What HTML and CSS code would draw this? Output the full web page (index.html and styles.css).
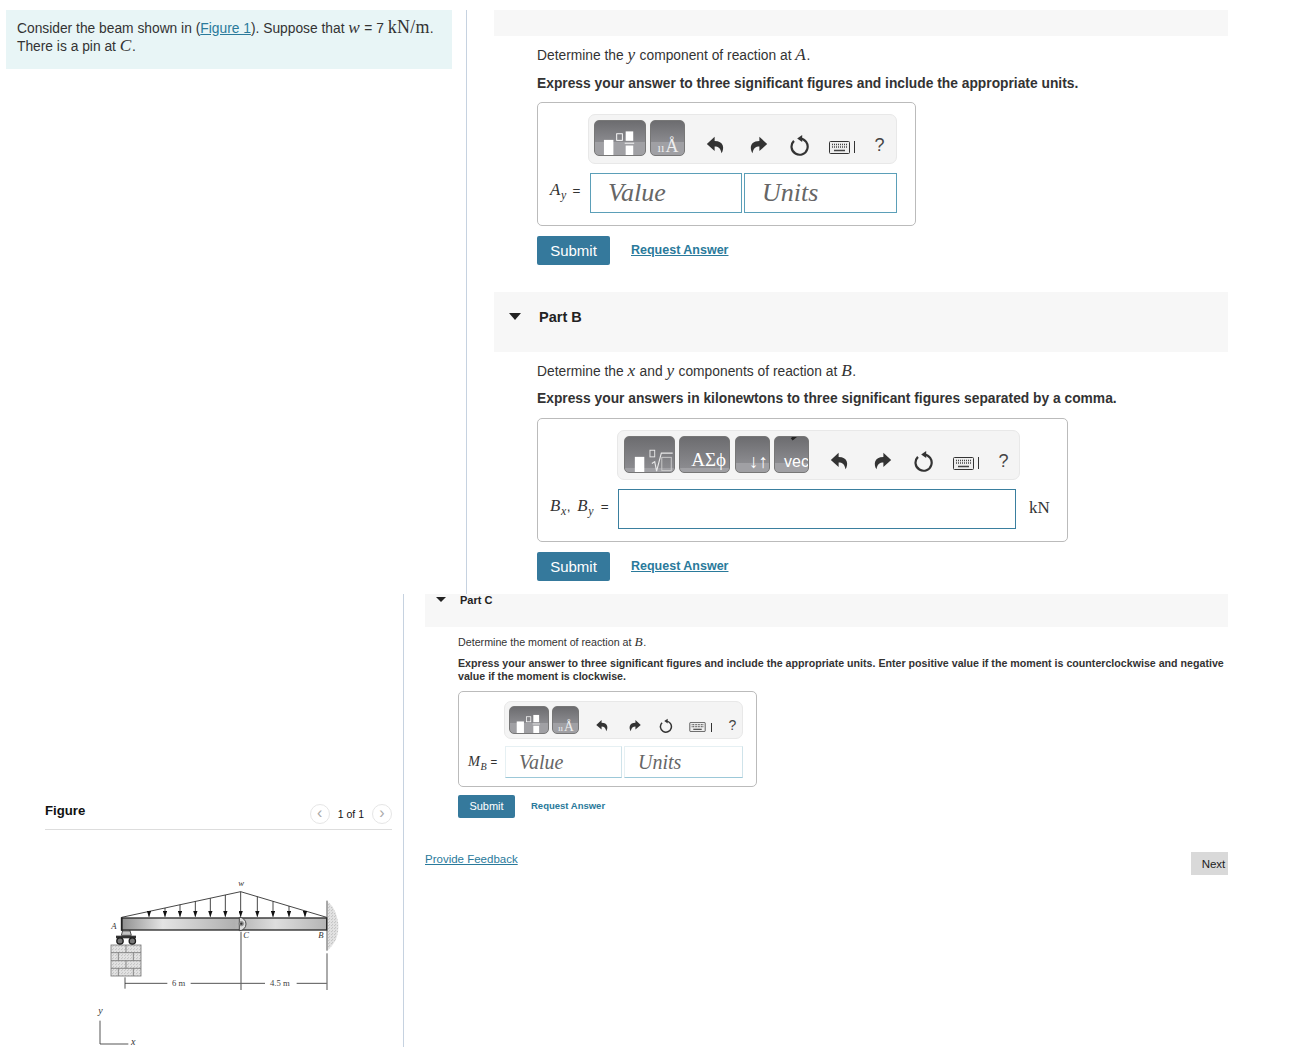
FILE: index.html
```html
<!DOCTYPE html>
<html>

	<head lang="en">
		<meta charset="UTF-8">
		<title>Beam reactions</title>
		<link rel="stylesheet" href="styles.css">
	</head>

	<body>
		<svg class="defs" width="0" height="0">
			<symbol id="undo" viewBox="0 0 24 24"><path d="M10.500 7.500V3L2 11l8.500 7.500v-4.800c4 0 6.500 1.800 7.500 7.300 3.500-5.500 2.500-13.500-7.500-13.500z"/></symbol>
			<symbol id="redo" viewBox="0 0 24 24"><path d="M13.500 7.500V3L22 11l-8.500 7.500v-4.800c-4 0-6.500 1.800-7.500 7.300-3.500-5.500-2.500-13.500 7.500-13.500z"/></symbol>
			<symbol id="reset" viewBox="0 0 24 24"><path d="M6.500 7.500A8.800 8.800 0 1 0 13 5" fill="none" stroke="currentColor" stroke-width="2.400"/><path d="M10 4.800 15.500 1V8.800z"/></symbol>
			<symbol id="keys" viewBox="0 0 21 13"><rect x="0.500" y="0.500" width="20" height="12" rx="1" fill="#eee" stroke="#333"/><path d="M3 3.500h15M3 6h15" stroke="#444" stroke-width="1.500" stroke-dasharray="1 1"/><path d="M5 9.500h11" stroke="#444" stroke-width="1.500"/></symbol>
		</svg>

		<!-- top half -->
		<div class="top">
			<div class="note">
				Consider the beam shown in (<a href="#">Figure 1</a>). Suppose that <i class="m">w</i> = 7 <span class="m-up">kN/m</span>.<br>
				There is a pin at <i class="m">C</i>.
			</div>
			<div class="main">
				<div class="bar bar-a"></div>
				<div class="body">
					<p class="ask">Determine the <i class="m">y</i> component of reaction at <i class="m">A</i>.</p>
					<p class="hint">Express your answer to three significant figures and include the appropriate units.</p>
					<div class="box box-a">
						<div class="toolbar tb-a">
							<div class="btn b-tmpl">
								<svg viewBox="0 0 52 36"><rect x="9" y="20" width="10" height="16" fill="#fff"/><rect x="22.500" y="13.500" width="6" height="7" fill="none" stroke="#fff"/><rect x="32" y="11" width="8" height="10" fill="#fff"/><path d="M31 23.500h10" stroke="#fff"/><rect x="32" y="26" width="8" height="10" fill="#fff"/></svg>
							</div>
							<div class="btn b-unit">
								<svg viewBox="0 0 35 36"><text x="7" y="33" class="ic-s">ıı</text><text x="15.500" y="33" class="ic-l">Å</text></svg>
							</div>
							<div class="tools">
								<svg class="ic"><use href="#undo"/></svg>
								<svg class="ic"><use href="#redo"/></svg>
								<svg class="ic"><use href="#reset"/></svg>
								<svg class="kb"><use href="#keys"/></svg>
								<span class="pipe"></span>
								<span class="qm">?</span>
							</div>
						</div>
						<div class="row">
							<span class="lbl lbl-a"><i class="m">A<sub>y</sub></i> =</span>
							<div class="inp w-val">Value</div>
							<div class="inp w-unit">Units</div>
						</div>
					</div>
					<div class="actions">
						<button class="submit">Submit</button>
						<a href="#" class="req">Request Answer</a>
					</div>
				</div>

				<div class="bar bar-b">
					<span class="tri"></span>
					<b>Part B</b>
				</div>
				<div class="body">
					<p class="ask ask-b">Determine the <i class="m">x</i> and <i class="m">y</i> components of reaction at <i class="m">B</i>.</p>
					<p class="hint hint-b">Express your answers in kilonewtons to three significant figures separated by a comma.</p>
					<div class="box box-b">
						<div class="toolbar tb-b">
							<div class="btn b-root">
								<svg viewBox="0 0 51 37"><rect x="10" y="21" width="10" height="16" fill="#fff"/><rect x="26" y="14" width="5" height="7" fill="none" stroke="#e8e8e8"/><path d="M28 28l3-2 2 10 5-19h12" fill="none" stroke="#e8e8e8" stroke-width="1.200"/><rect x="38.500" y="21.500" width="10" height="14" fill="none" stroke="#ccc"/></svg>
							</div>
							<div class="btn b-greek"><span>ΑΣϕ</span></div>
							<div class="btn b-arrows"><span>↓↑</span></div>
							<div class="btn b-vec"><span>vec</span></div>
							<div class="tools">
								<svg class="ic"><use href="#undo"/></svg>
								<svg class="ic"><use href="#redo"/></svg>
								<svg class="ic"><use href="#reset"/></svg>
								<svg class="kb"><use href="#keys"/></svg>
								<span class="pipe"></span>
								<span class="qm">?</span>
							</div>
						</div>
						<div class="row">
							<span class="lbl lbl-b"><i class="m">B<sub>x</sub></i>, <i class="m">B<sub>y</sub></i> =</span>
							<div class="inp w-wide"></div>
							<span class="unit">kN</span>
						</div>
					</div>
					<div class="actions">
						<button class="submit">Submit</button>
						<a href="#" class="req">Request Answer</a>
					</div>
				</div>
			</div>
		</div>

		<!-- bottom half, smaller zoom -->
		<div class="bottom">
			<div class="fig">
				<div class="fig-head">
					<b>Figure</b>
					<div class="pager">
						<span class="round">‹</span>
						<span>1 of 1</span>
						<span class="round">›</span>
					</div>
				</div>
				<svg class="beam" viewBox="0 0 840 555">
					<defs>
						<linearGradient id="steel" x1="0" x2="1" y1="0" y2="0">
							<stop offset="0" stop-color="#8f8f8f"/>
							<stop offset="0.2" stop-color="#e4e4e4"/>
							<stop offset="0.55" stop-color="#b0b0b0"/>
							<stop offset="0.75" stop-color="#dedede"/>
							<stop offset="1" stop-color="#b4b4b4"/>
						</linearGradient>
						<pattern id="speck" width="9" height="9" patternUnits="userSpaceOnUse">
							<rect width="9" height="9" fill="#e6e6e6"/>
							<circle cx="2" cy="2" r="1.600" fill="#aaa"/>
							<circle cx="7" cy="5" r="1.400" fill="#999"/>
							<circle cx="3" cy="7.500" r="1" fill="#bbb"/>
						</pattern>
						<marker id="head" markerWidth="18" markerHeight="13" refX="13" refY="5" orient="auto" markerUnits="userSpaceOnUse" viewBox="0 0 14 10"><path d="M0 0L14 5L0 10z" fill="#111"/></marker>
					</defs>
					<!-- bricks -->
					<g stroke="#777" stroke-width="2.500">
						<rect x="93" y="225" width="90" height="93" fill="url(#speck)"/>
						<path d="M93 248h90M93 272h90M93 295h90M138 225v23M115 248v24M160 248v24M138 272v23M115 295v23M160 295v23" fill="none"/>
					</g>
					<!-- roller support -->
					<path d="M124 196L132 168H146L154 196z" fill="#c4c4c4" stroke="#333" stroke-width="2.500"/>
					<circle cx="139" cy="166" r="7" fill="#ddd" stroke="#333" stroke-width="2.500"/>
					<path d="M128 183H150" stroke="#444" stroke-width="2"/>
					<rect x="108" y="197" width="60" height="8" fill="#333"/>
					<circle cx="120" cy="213" r="9.500" fill="#777" stroke="#1a1a1a" stroke-width="4"/>
					<circle cx="157" cy="213" r="9.500" fill="#777" stroke="#1a1a1a" stroke-width="4"/>
					<!-- wall -->
					<path d="M743 96C760 105 775 140 775 170C775 205 760 225 743 240z" fill="url(#speck)"/>
					<path d="M741 92V242" stroke="#555" stroke-width="3"/>
					<!-- beam -->
					<rect x="125" y="144" width="615" height="36" fill="url(#steel)" stroke="#2a2a2a" stroke-width="4"/>
					<path d="M125 142V182" stroke="#222" stroke-width="5"/>
					<path d="M478 142a20 20 0 0 1 0 40z" fill="#ddd" stroke="#333" stroke-width="2.500"/>
					<circle cx="484" cy="161" r="7" fill="#999" stroke="#555"/>
					<circle cx="484" cy="161" r="3.500" fill="#333"/>
					<!-- load -->
					<path d="M125 142L482 65L740 142" fill="none" stroke="#222" stroke-width="2.500"/>
					<g stroke="#222" stroke-width="2.500">
						<line x1="207" y1="124" x2="207" y2="140" marker-end="url(#head)"/>
						<line x1="255" y1="114" x2="255" y2="140" marker-end="url(#head)"/>
						<line x1="300" y1="104" x2="300" y2="140" marker-end="url(#head)"/>
						<line x1="346" y1="94" x2="346" y2="140" marker-end="url(#head)"/>
						<line x1="391" y1="85" x2="391" y2="140" marker-end="url(#head)"/>
						<line x1="436" y1="75" x2="436" y2="140" marker-end="url(#head)"/>
						<line x1="482" y1="65" x2="482" y2="140" marker-end="url(#head)"/>
						<line x1="532" y1="80" x2="532" y2="140" marker-end="url(#head)"/>
						<line x1="579" y1="94" x2="579" y2="140" marker-end="url(#head)"/>
						<line x1="627" y1="108" x2="627" y2="140" marker-end="url(#head)"/>
						<line x1="675" y1="123" x2="675" y2="140" marker-end="url(#head)"/>
					</g>
					<!-- dimensions -->
					<g stroke="#333" stroke-width="2.500" fill="none">
						<path d="M135 322V356M135 340H262M332 340H555M650 340H740"/>
						<path d="M483 185V360" stroke-width="3.500" stroke="#666"/>
						<path d="M741 250V360"/>
						<path d="M60 452V522H145"/>
					</g>
					<g class="fig-txt">
						<text x="94" y="178">A</text>
						<text x="490" y="203">C</text>
						<text x="715" y="204">B</text>
						<text x="475" y="48">w</text>
						<text x="55" y="432" class="fig-ax">y</text>
						<text x="153" y="526" class="fig-ax">x</text>
					</g>
					<g class="fig-dim">
						<text x="276" y="347">6 m</text>
						<text x="570" y="347">4.5 m</text>
					</g>
				</svg>
			</div>
			<div class="main-c">
				<div class="bar bar-c">
					<span class="tri tri-c"></span>
					<b>Part C</b>
				</div>
				<div class="body-c">
					<p class="ask-c">Determine the moment of reaction at <i class="m">B</i>.</p>
					<p class="hint-c">Express your answer to three significant figures and include the appropriate units. Enter positive value if the moment is counterclockwise and negative value if the moment is clockwise.</p>
					<div class="box box-c">
						<div class="toolbar tb-c">
							<div class="btn b-tmpl-c">
								<svg viewBox="0 0 52 36"><rect x="9" y="20" width="10" height="16" fill="#fff"/><rect x="22.500" y="13.500" width="6" height="7" fill="none" stroke="#fff"/><rect x="32" y="11" width="8" height="10" fill="#fff"/><path d="M31 23.500h10" stroke="#fff"/><rect x="32" y="26" width="8" height="10" fill="#fff"/></svg>
							</div>
							<div class="btn b-unit-c">
								<svg viewBox="0 0 35 36"><text x="7" y="33" class="ic-s">ıı</text><text x="15.500" y="33" class="ic-l">Å</text></svg>
							</div>
							<div class="tools">
								<svg class="ic"><use href="#undo"/></svg>
								<svg class="ic"><use href="#redo"/></svg>
								<svg class="ic"><use href="#reset"/></svg>
								<svg class="kb"><use href="#keys"/></svg>
								<span class="pipe"></span>
								<span class="qm">?</span>
							</div>
						</div>
						<div class="row">
							<span class="lbl lbl-c"><i class="m">M<sub>B</sub></i> =</span>
							<div class="inp inp-c w-val-c">Value</div>
							<div class="inp inp-c w-unit-c">Units</div>
						</div>
					</div>
					<div class="actions actions-c">
						<button class="submit submit-c">Submit</button>
						<a href="#" class="req req-c">Request Answer</a>
					</div>
				</div>
				<div class="foot">
					<a href="#" class="feedback">Provide Feedback</a>
					<button class="next">Next</button>
				</div>
			</div>
		</div>
	</body>

</html>
```

FILE: styles.css
```css
* {
	margin: 0;
	padding: 0;
	box-sizing: border-box;
}

body {
	font-family: "Liberation Sans", Arial, sans-serif;
	font-size: 13.800px;
	line-height: 20px;
	color: #333;
	background: #fff;
}

a {
	color: #2a7a9b;
}

.defs {
	display: block;
	height: 0;
}

.m {
	font-family: "Liberation Serif", serif;
	font-size: 1.250em;
	line-height: 0;
	letter-spacing: 0.600px;
}

.m sub {
	font-size: 0.700em;
	line-height: 0;
}

.m-up {
	font-family: "Liberation Serif", serif;
	font-size: 1.300em;
	line-height: 0;
	letter-spacing: 0.300px;
}

/* top half */
.top {
	display: flex;
	height: 594px;
	padding-top: 10px;
}

.note {
	width: 446px;
	height: 59px;
	margin-left: 6px;
	padding: 10px 11px;
	background-color: #e8f5f6;
	line-height: 18px;
}

.main {
	width: 762px;
	margin-left: 14px;
	padding-left: 27px;
	border-left: 1px solid #c6d2e0;
}

.bar {
	background-color: #f7f7f7;
}

.bar-a {
	height: 26px;
}

.bar-b {
	display: flex;
	align-items: center;
	height: 60px;
	margin-top: 27px;
	padding: 0 0 11px 15px;
	font-size: 14.500px;
	color: #222;
}

.tri {
	width: 0;
	height: 0;
	margin-right: 18px;
	border-left: 6px solid transparent;
	border-right: 6px solid transparent;
	border-top: 7px solid #222;
}

.body {
	padding-left: 43px;
}

.ask {
	margin-top: 10px;
}

.hint {
	margin-top: 8px;
	font-weight: bold;
}

.hint-b {
	margin-top: 7px;
}

/* answer box */
.box {
	margin-top: 8px;
	border: 1px solid #bbb;
	border-radius: 5px;
}

.box-a {
	width: 379px;
	height: 124px;
	padding-top: 11px;
}

.box-b {
	width: 531px;
	height: 124px;
	margin-top: 9px;
	padding-top: 11px;
}

.toolbar {
	display: flex;
	align-items: flex-start;
	height: 50px;
	padding: 5px 0 0 5px;
	background-color: #f4f4f4;
	border: 1px solid #e8e8e8;
	border-radius: 7px;
}

.tb-a {
	width: 309px;
	margin-left: 50px;
	gap: 4px;
}

.tb-b {
	width: 403px;
	margin-left: 79px;
	padding-left: 6px;
	gap: 4px;
}

.btn {
	overflow: hidden;
	height: 36px;
	border-radius: 5px;
	border: 1px solid #777;
	background: linear-gradient(#6c6c6f, #8b8b8f 62%, #a0a0a4 62%);
	color: #fff;
	text-align: right;
	white-space: nowrap;
}

.btn svg {
	display: block;
	width: 100%;
	height: 100%;
}

.ic-s {
	font-family: "Liberation Serif", serif;
	font-size: 13px;
	fill: #eee;
}

.ic-l {
	font-family: "Liberation Serif", serif;
	font-size: 19px;
	fill: #eee;
}

.b-tmpl {
	width: 52px;
}

.b-unit {
	width: 35px;
}

.b-root,
.b-greek,
.b-arrows,
.b-vec {
	height: 37px;
	background: linear-gradient(#6c6c6f, #8b8b8f 88%, #a0a0a4 88%);
}

.b-root,
.b-greek {
	width: 51px;
}

.b-arrows {
	width: 35px;
	margin-left: 1px;
	background: linear-gradient(#6c6c6f, #8b8b8f 74%, #a0a0a4 74%);
}

.b-vec {
	position: relative;
	width: 35px;
	background: linear-gradient(#6c6c6f, #8b8b8f 74%, #a0a0a4 74%);
}

/* the little vector mark clipped at the top of the button */
.b-vec::before {
	content: "";
	position: absolute;
	top: -1px;
	left: 16px;
	width: 6px;
	height: 3px;
	background-color: #222;
	transform: rotate(-40deg);
}

.b-greek span {
	display: block;
	padding-right: 3px;
	font-family: "Liberation Serif", serif;
	font-size: 19px;
	line-height: 46px;
}

.b-arrows span {
	display: block;
	padding-right: 1px;
	font-size: 19px;
	line-height: 50px;
}

.b-vec span {
	display: block;
	margin-left: 9px;
	text-align: left;
	font-size: 16px;
	line-height: 50px;
}

.tools {
	display: flex;
	align-items: center;
	height: 40px;
	margin-top: 5px;
	color: #333;
}

.tb-a .tools {
	margin-left: 16px;
	gap: 19.500px;
}

.tb-b .tools {
	margin-left: 16px;
	gap: 19.500px;
}

.ic {
	width: 22px;
	height: 22px;
	fill: #333;
	flex: none;
}

.kb {
	width: 21px;
	height: 13px;
	margin-top: 4px;
	margin-left: -1px;
	flex: none;
}

.pipe {
	width: 1px;
	height: 12px;
	margin: 4px 0 0 -15px;
	background-color: #333;
}

.qm {
	font-size: 18px;
	color: #444;
}

.row {
	display: flex;
	align-items: center;
	margin-top: 9px;
	padding-left: 12px;
}

.lbl {
	flex: none;
	padding-bottom: 4px;
	font-size: 13.500px;
}

.lbl-a {
	width: 40px;
	word-spacing: 2px;
}

.lbl-b {
	width: 68px;
	word-spacing: 3px;
}

.inp {
	height: 40px;
	padding-left: 17px;
	border: 1px solid #5b9fb8;
	font-family: "Liberation Serif", serif;
	font-style: italic;
	font-size: 26px;
	line-height: 38px;
	color: #666;
}

.w-val {
	width: 152px;
	margin-right: 2px;
}

.w-unit {
	width: 153px;
}

.w-wide {
	width: 398px;
	border-color: #3a7f9f;
}

.unit {
	margin-left: 13px;
	padding-bottom: 2px;
	font-family: "Liberation Serif", serif;
	font-size: 17px;
}

.actions {
	display: flex;
	align-items: center;
	margin-top: 10px;
}

.submit {
	width: 73px;
	height: 29px;
	padding-bottom: 1px;
	border: none;
	border-radius: 2px;
	background-color: #35799c;
	color: #fff;
	font-family: inherit;
	font-size: 15px;
}

.req {
	margin-left: 21px;
	padding-bottom: 2px;
	font-size: 12.500px;
	font-weight: bold;
}

/* bottom half */
.bottom {
	display: flex;
	height: 453px;
}

.fig {
	width: 404px;
	height: 453px;
	border-right: 1px solid #c6d2e0;
}

.fig-head {
	display: flex;
	align-items: center;
	justify-content: space-between;
	width: 347px;
	height: 236px;
	margin-left: 45px;
	padding-top: 198px;
	border-bottom: 1px solid #ddd;
	font-size: 13.200px;
	color: #111;
}

.pager {
	display: flex;
	align-items: center;
	gap: 8px;
	margin-top: 7px;
	font-size: 10.500px;
}

.round {
	width: 20px;
	height: 20px;
	border: 1px solid #e6e6e6;
	border-radius: 50%;
	color: #aaa;
	font-size: 16px;
	line-height: 16px;
	text-align: center;
}

.beam {
	display: block;
	width: 280px;
	height: 185px;
	margin: 40px 0 0 80px;
}

.fig-txt text {
	font-family: "Liberation Serif", serif;
	font-style: italic;
	font-size: 26px;
	fill: #333;
}

.fig-txt .fig-ax {
	font-size: 30px;
}

.fig-dim text {
	font-family: "Liberation Serif", serif;
	font-size: 26px;
	fill: #444;
}

.main-c {
	width: 803px;
	margin-left: 21px;
}

.bar-c {
	display: flex;
	align-items: flex-start;
	height: 33px;
	padding-left: 11px;
	font-size: 11px;
	line-height: 12px;
	color: #222;
}

.tri-c {
	margin: 3px 14px 0 0;
	border-left-width: 5px;
	border-right-width: 5px;
	border-top-width: 5px;
}

.body-c {
	padding-left: 33px;
}

.ask-c {
	margin-top: 7px;
	font-size: 10.700px;
	line-height: 16px;
}

.hint-c {
	margin-top: 7px;
	font-size: 10.650px;
	font-weight: bold;
	line-height: 13px;
}

.box-c {
	width: 299px;
	height: 96px;
	margin-top: 8px;
	padding-top: 9px;
}

.tb-c {
	width: 239px;
	height: 38px;
	margin-left: 45px;
	padding: 4px 0 0 4px;
	gap: 3px;
}

.b-tmpl-c,
.b-unit-c {
	height: 28px;
}

.b-tmpl-c {
	width: 40px;
}

.b-unit-c {
	width: 27px;
}

.tb-c .tools {
	height: 30px;
	margin-top: 4px;
	margin-left: 13px;
	gap: 16.500px;
}

.tb-c .ic {
	width: 15px;
	height: 15px;
}

.tb-c .kb {
	width: 17px;
	height: 10px;
}

.tb-c .pipe {
	height: 9px;
	margin-left: -11px;
}

.tb-c .qm {
	font-size: 14px;
}

.box-c .row {
	margin-top: 7px;
	padding-left: 9px;
}

.lbl-c {
	width: 37px;
	padding-bottom: 0;
	font-size: 11.500px;
}

.inp-c {
	height: 32px;
	padding-left: 13px;
	border-color: #e6f0f3;
	border-bottom-color: #9cc8d8;
	border-right-color: #cfe3ea;
	font-size: 20px;
	line-height: 30px;
}

.w-val-c {
	width: 117px;
	margin-right: 2px;
}

.w-unit-c {
	width: 119px;
}

.actions-c {
	margin-top: 8px;
}

.submit-c {
	width: 57px;
	height: 23px;
	font-size: 11px;
}

.req-c {
	margin-left: 16px;
	font-size: 9.500px;
	text-decoration: none;
}

.foot {
	display: flex;
	align-items: flex-start;
	justify-content: space-between;
	margin-top: 34px;
}

.feedback {
	font-size: 11.500px;
	line-height: 14px;
}

.next {
	width: 37px;
	height: 23px;
	padding-left: 8px;
	border: none;
	background-color: #d9d9d9;
	color: #222;
	font-family: inherit;
	font-size: 11.500px;
}
```
